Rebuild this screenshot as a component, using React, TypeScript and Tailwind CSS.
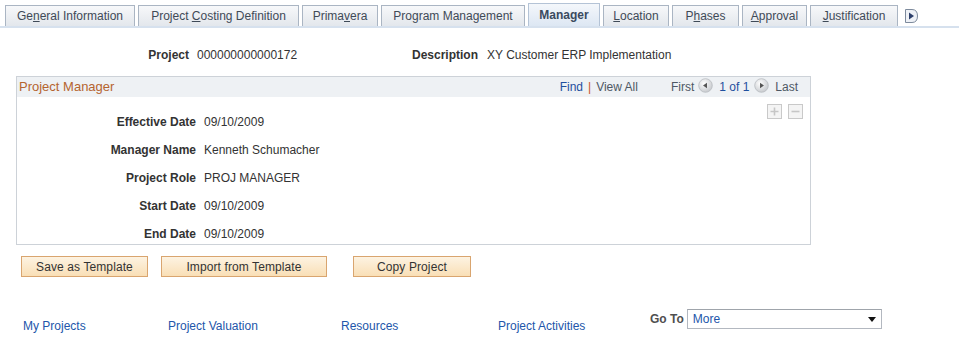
const tabs = [
  { pre: "Ge", key: "n", post: "eral Information", w: "w-[130px]" },
  { pre: "Project ", key: "C", post: "osting Definition", w: "w-[161px]" },
  { pre: "Prima", key: "v", post: "era", w: "w-[76px]" },
  { pre: "Pro", key: "g", post: "ram Management", w: "w-[144px]" },
  { pre: "Manager", key: "", post: "", w: "w-[72px]", active: true },
  { pre: "", key: "L", post: "ocation", w: "w-[66px]" },
  { pre: "P", key: "h", post: "ases", w: "w-[67px]" },
  { pre: "", key: "A", post: "pproval", w: "w-[65px]" },
  { pre: "", key: "J", post: "ustification", w: "w-[88px]" },
]

const fields = [
  ["Effective Date", "09/10/2009"],
  ["Manager Name", "Kenneth Schumacher"],
  ["Project Role", "PROJ MANAGER"],
  ["Start Date", "09/10/2009"],
  ["End Date", "09/10/2009"],
]

function NavCircle({ dir }: { dir: "left" | "right" }) {
  return (
    <svg width="15" height="15" viewBox="0 0 15 15" className="mb-[3px]">
      <defs>
        <radialGradient id={`g-${dir}`} cx="40%" cy="35%" r="70%">
          <stop offset="0%" stopColor="#ffffff" />
          <stop offset="100%" stopColor="#c4c7cb" />
        </radialGradient>
      </defs>
      <circle cx="7.5" cy="7.5" r="6.8" fill={`url(#g-${dir})`} stroke="#b7bbc0" strokeWidth="0.8" />
      {dir === "left" ? (
        <path d="M5 7.5 L9 4.8 L9 10.2 Z" fill="#555" />
      ) : (
        <path d="M10 7.5 L6 4.8 L6 10.2 Z" fill="#555" />
      )}
    </svg>
  )
}

function Button({ label, w, ml }: { label: string; w: string; ml: string }) {
  return (
    <div
      className={`${w} ${ml} h-[21px] flex items-center justify-center border border-[#d9a56f] bg-gradient-to-b from-[#fdf3e2] to-[#f9dfb6] text-[12px] text-[#333] tracking-[0.1px]`}
    >
      {label}
    </div>
  )
}

export default function App() {
  return (
    <div className="w-[969px] h-[340px] bg-white text-[12px] text-[#333] font-['Liberation_Sans',Arial,sans-serif] overflow-hidden">
      {/* tab strip */}
      <div className="flex items-end pl-[5px] pt-[3px] w-[959px] border-b-2 border-[#d6e1ee]">
        {tabs.map((t, i) =>
          t.active ? (
            <div
              key={i}
              className={`${t.w} h-[23px] mr-[3px] flex items-center justify-center border border-b-0 border-[#b4c3d6] bg-gradient-to-b from-[#f4f7fb] to-[#dde7f3] font-bold text-[#3a4a5e]`}
            >
              {t.pre}
            </div>
          ) : (
            <div
              key={i}
              className={`${t.w} h-[21px] mr-[3px] flex items-center justify-center border border-b-0 border-[#aab5c3] bg-gradient-to-b from-[#f7f8fa] to-[#e3e7ec] text-[#3f4a57]`}
            >
              <span>
                {t.pre}
                <span className="underline">{t.key}</span>
                {t.post}
              </span>
            </div>
          )
        )}
        <div className="self-start mt-[6px] ml-[4px]">
          <svg width="13" height="14" viewBox="0 0 13 14">
            <path d="M0.5 0.5 H7 Q12.5 0.5 12.5 7 Q12.5 13.5 7 13.5 H0.5 Z" fill="#eef1f6" stroke="#7d8a9c" />
            <path d="M4 3.5 L9 7 L4 10.5 Z" fill="#2d3f6b" />
          </svg>
        </div>
      </div>

      {/* project line */}
      <div className="flex h-[16px] leading-[16px] mt-[19px]">
        <div className="w-[189px] text-right font-bold">Project</div>
        <div className="w-[208px] ml-[8px]">000000000000172</div>
        <div className="w-[73px] text-right font-bold">Description</div>
        <div className="ml-[9px]">XY Customer ERP Implementation</div>
      </div>

      {/* project manager box */}
      <div className="ml-[16px] mt-[13px] w-[795px] border border-[#cdd2d8]">
        <div className="h-[20px] bg-[#eef1f4] flex items-center pl-[2px] pr-[12px]">
          <div className="text-[13px] text-[#b5642f]">Project Manager</div>
          <div className="ml-auto flex items-center">
            <span className="text-[#1f4f9e]">Find</span>
            <span className="mx-[5px] text-[#c9502a]">|</span>
            <span className="text-[#4e5864]">View All</span>
            <span className="ml-[33px] mr-[4px] text-[#4e5864]">First</span>
            <NavCircle dir="left" />
            <span className="ml-[6px] mr-[5px] text-[#1f4f9e]">1 of 1</span>
            <NavCircle dir="right" />
            <span className="ml-[6px] text-[#4e5864]">Last</span>
          </div>
        </div>
        <div className="flex">
          <div className="flex-1 flex flex-col gap-[12px] pt-[17px] pb-[2px]">
            {fields.map(([label, value]) => (
              <div key={label} className="flex h-[16px] leading-[16px]">
                <div className="w-[179px] text-right font-bold">{label}</div>
                <div className="ml-[8px]">{value}</div>
              </div>
            ))}
          </div>
          <div className="flex gap-[6px] pt-[7px] pr-[7px] self-start">
            <div className="w-[15px] h-[15px] border border-[#c9c9c9] bg-[#f4f4f4] flex items-center justify-center">
              <svg width="9" height="9" viewBox="0 0 9 9">
                <path d="M4.5 0.5 V8.5 M0.5 4.5 H8.5" stroke="#c6c6c6" strokeWidth="1.6" />
              </svg>
            </div>
            <div className="w-[15px] h-[15px] border border-[#c9c9c9] bg-[#f4f4f4] flex items-center justify-center">
              <svg width="9" height="9" viewBox="0 0 9 9">
                <path d="M0.5 4.5 H8.5" stroke="#c6c6c6" strokeWidth="1.6" />
              </svg>
            </div>
          </div>
        </div>
      </div>

      {/* buttons */}
      <div className="flex mt-[11px]">
        <Button label="Save as Template" w="w-[127px]" ml="ml-[21px]" />
        <Button label="Import from Template" w="w-[166px]" ml="ml-[13px]" />
        <Button label="Copy Project" w="w-[118px]" ml="ml-[26px]" />
      </div>

      {/* links */}
      <div className="flex items-start mt-[32px] text-[#2256aa]">
        <div className="ml-[23px] w-[145px] mt-[9px] h-[16px] leading-[16px]">My Projects</div>
        <div className="w-[173px] mt-[9px] h-[16px] leading-[16px]">Project Valuation</div>
        <div className="w-[157px] mt-[9px] h-[16px] leading-[16px]">Resources</div>
        <div className="w-[152px] mt-[9px] h-[16px] leading-[16px]">Project Activities</div>
        <div className="flex items-center h-[20px]">
          <span className="font-bold text-[#4f4f4f] mr-[3px]">Go To</span>
          <div className="w-[195px] h-[20px] border border-[#b3b8c0] border-t-[#9fa4ab] bg-white flex items-center pl-[5px] pr-[5px]">
            <span className="text-[#2256aa]">More</span>
            <svg className="ml-auto" width="8" height="5" viewBox="0 0 8 5">
              <path d="M0 0 H8 L4 5 Z" fill="#111" />
            </svg>
          </div>
        </div>
      </div>
    </div>
  )
}
